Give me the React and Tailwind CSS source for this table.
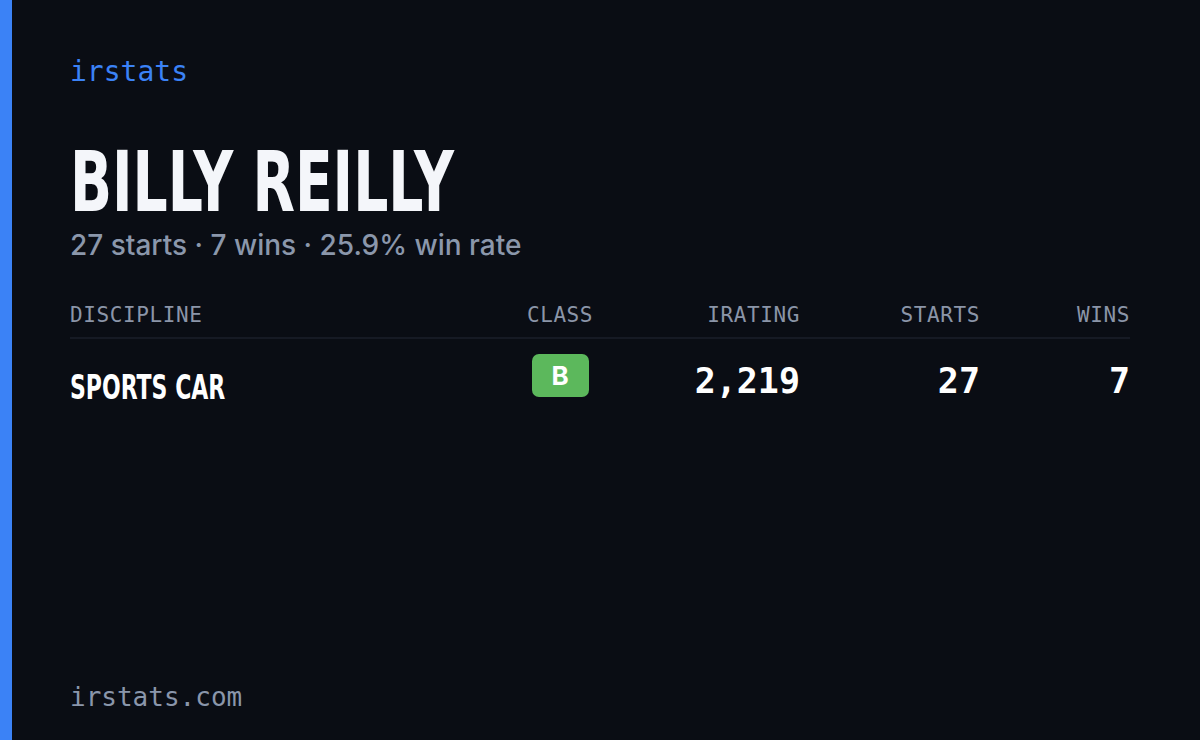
import React from "react";

const mono = { fontFamily: '"DejaVu Sans Mono", "Liberation Mono", monospace' };
const cond = { fontFamily: '"DejaVu Sans Condensed", "Liberation Sans", sans-serif' };

const rows = [{ discipline: "SPORTS CAR", cls: "B", irating: "2,219", starts: "27", wins: "7" }];

const App = () => {
  return (
    <div className="flex w-[1200px] h-[740px] bg-[#0a0d14] overflow-hidden">
      {/* accent bar */}
      <div className="w-[12px] bg-[#3b82f6]"></div>
      <div className="flex flex-col flex-1 pl-[58px] pr-[70px] pt-[54px] pb-[26px]">
        <p className="text-[28px] leading-[36px] text-[#3b82f6]" style={mono}>
          irstats
        </p>
        {/* name */}
        <h1
          className="mt-[50px] text-[84px] leading-[84px] font-bold text-[#f4f6fa] origin-left scale-x-[0.73] whitespace-nowrap"
          style={cond}
        >
          BILLY REILLY
        </h1>
        <p
          className="mt-[4px] text-[28px] leading-[34px] font-medium text-[#8b97ab]"
          style={{ fontFamily: 'Inter, "Inter Variable", Roboto, sans-serif' }}
        >
          27 starts · 7 wins · 25.9% win rate
        </p>
        {/* table */}
        <div className="mt-[39px]">
          <div
            className="grid grid-cols-[425px_130px_175px_180px_150px] text-[21px] leading-[28px] tracking-[0.6px] text-[#8b95a8] pb-[8px] border-b-2 border-[#161a24]"
            style={mono}
          >
            <span>DISCIPLINE</span>
            <span className="text-center">CLASS</span>
            <span className="text-right">IRATING</span>
            <span className="text-right">STARTS</span>
            <span className="text-right">WINS</span>
          </div>
          {rows.map((r) => (
            <div key={r.discipline} className="grid grid-cols-[425px_130px_175px_180px_150px] items-center pt-[16px]">
              <span
                className="text-[34px] leading-[40px] mt-[12px] font-bold text-white origin-left scale-x-[0.72] whitespace-nowrap"
                style={cond}
              >
                {r.discipline}
              </span>
              <span className="flex justify-center -mt-[12px]">
                <span
                  className="flex items-center justify-center w-[57px] h-[43px] rounded-[7px] bg-[#5cb85c] text-white text-[26px] font-bold"
                  style={{ fontFamily: 'Inter, "Inter Variable", Roboto, sans-serif' }}
                >
                  {r.cls}
                </span>
              </span>
              <span className="text-right text-[35px] font-bold text-white" style={mono}>
                {r.irating}
              </span>
              <span className="text-right text-[35px] font-bold text-white" style={mono}>
                {r.starts}
              </span>
              <span className="text-right text-[35px] font-bold text-white" style={mono}>
                {r.wins}
              </span>
            </div>
          ))}
        </div>
        <p className="mt-auto text-[26px] leading-[34px] text-[#8a96ab]" style={mono}>
          irstats.com
        </p>
      </div>
    </div>
  );
};

export default App;
